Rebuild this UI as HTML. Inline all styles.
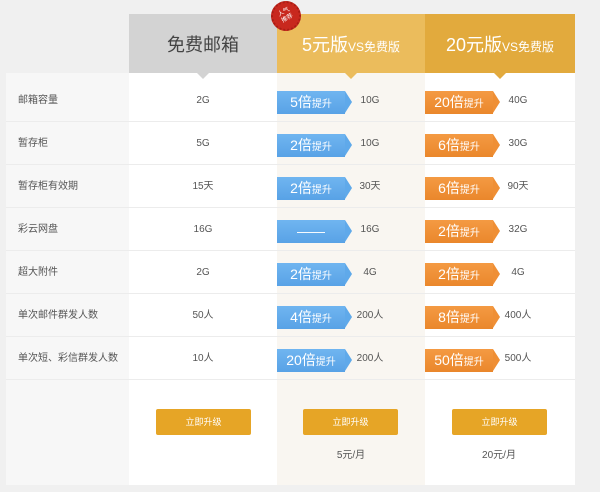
<!DOCTYPE html>
<html><head><meta charset="utf-8"><style>
*{margin:0;padding:0;box-sizing:border-box}
body{width:600px;height:492px;background:#f0f0f0;position:relative;overflow:hidden;font-family:"Liberation Sans","Noto Sans CJK SC",sans-serif;}
.a{position:absolute}
.h{top:14px;height:59px;text-align:center;line-height:63px;font-size:18px}
.ptr{position:absolute;bottom:-6px;left:50%;margin-left:-6px;width:0;height:0;border-left:6px solid transparent;border-right:6px solid transparent;border-top:6px solid}
.row{position:absolute;left:6px;width:569px;height:43px;border-bottom:1px solid #ececec;font-size:10px;color:#555}
.lbl{position:absolute;left:12px;top:0;line-height:43px}
.v{position:absolute;top:0;line-height:43px;width:60px;margin-left:-30px;text-align:center}
.b{position:absolute;top:12px;height:23px;width:68px;color:#fff;font-size:14px;line-height:23px;text-align:center}
.b small{font-size:10px}
.b:after{content:"";position:absolute;right:-7px;top:0;border-top:11.5px solid transparent;border-bottom:11.5px solid transparent;border-left:7px solid}
.bl{left:271px;background:linear-gradient(#70b5f0,#58a2e6)}
.bl:after{border-left-color:#5fa9ea}
.or{left:419px;background:linear-gradient(#f49a43,#ea872c)}
.or:after{border-left-color:#ef8f35}
.btn{position:absolute;top:409px;width:95px;height:26px;background:#e6a526;border-radius:2px;color:#fff;font-size:9px;text-align:center;line-height:26px}
</style></head><body>
<div class="a" style="left:6px;top:73px;width:123px;height:412px;background:#f7f7f7"></div>
<div class="a" style="left:129px;top:73px;width:148px;height:412px;background:#fff"></div>
<div class="a" style="left:277px;top:73px;width:148px;height:412px;background:#f9f6f1"></div>
<div class="a" style="left:425px;top:73px;width:150px;height:412px;background:#fff"></div>

<div class="a h" style="left:129px;width:148px;background:#d3d3d3;color:#444">免费邮箱<div class="ptr" style="border-top-color:#d3d3d3"></div></div>
<div class="a h" style="left:277px;width:148px;background:#ebbc5c;color:#fff">5元版<span style="font-size:12px">VS免费版</span><div class="ptr" style="border-top-color:#ebbc5c"></div></div>
<div class="a h" style="left:425px;width:150px;background:#e2aa3d;color:#fff">20元版<span style="font-size:12px">VS免费版</span><div class="ptr" style="border-top-color:#e2aa3d"></div></div>
<div class="a" style="left:271px;top:1px;width:30px;height:30px;border-radius:50%;background:#c8281e;border:2px dotted #a81d14;color:#fff;font-size:6px;line-height:7px;text-align:center;padding-top:6px;transform:rotate(-30deg)">人气<br>推荐</div>

<div class="row" style="top:79px"><span class="lbl">邮箱容量</span><span class="v" style="left:197px">2G</span><div class="b bl">5倍<small>提升</small></div><span class="v" style="left:364px">10G</span><div class="b or">20倍<small>提升</small></div><span class="v" style="left:512px">40G</span></div>
<div class="row" style="top:122px"><span class="lbl">暂存柜</span><span class="v" style="left:197px">5G</span><div class="b bl">2倍<small>提升</small></div><span class="v" style="left:364px">10G</span><div class="b or">6倍<small>提升</small></div><span class="v" style="left:512px">30G</span></div>
<div class="row" style="top:165px"><span class="lbl">暂存柜有效期</span><span class="v" style="left:197px">15天</span><div class="b bl">2倍<small>提升</small></div><span class="v" style="left:364px">30天</span><div class="b or">6倍<small>提升</small></div><span class="v" style="left:512px">90天</span></div>
<div class="row" style="top:208px"><span class="lbl">彩云网盘</span><span class="v" style="left:197px">16G</span><div class="b bl">——</div><span class="v" style="left:364px">16G</span><div class="b or">2倍<small>提升</small></div><span class="v" style="left:512px">32G</span></div>
<div class="row" style="top:251px"><span class="lbl">超大附件</span><span class="v" style="left:197px">2G</span><div class="b bl">2倍<small>提升</small></div><span class="v" style="left:364px">4G</span><div class="b or">2倍<small>提升</small></div><span class="v" style="left:512px">4G</span></div>
<div class="row" style="top:294px"><span class="lbl">单次邮件群发人数</span><span class="v" style="left:197px">50人</span><div class="b bl">4倍<small>提升</small></div><span class="v" style="left:364px">200人</span><div class="b or">8倍<small>提升</small></div><span class="v" style="left:512px">400人</span></div>
<div class="row" style="top:337px"><span class="lbl">单次短、彩信群发人数</span><span class="v" style="left:197px">10人</span><div class="b bl">20倍<small>提升</small></div><span class="v" style="left:364px">200人</span><div class="b or">50倍<small>提升</small></div><span class="v" style="left:512px">500人</span></div>

<div class="btn" style="left:156px">立即升级</div>
<div class="btn" style="left:303px">立即升级</div>
<div class="btn" style="left:452px">立即升级</div>
<div class="a" style="left:321px;top:446px;width:60px;text-align:center;font-size:10px;color:#555">5元/月</div>
<div class="a" style="left:469px;top:446px;width:60px;text-align:center;font-size:10px;color:#555">20元/月</div>
</body></html>
